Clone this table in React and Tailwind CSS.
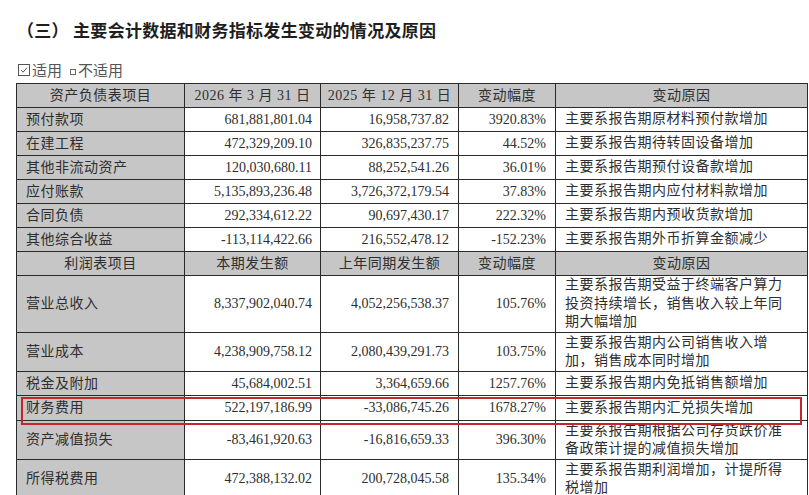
import React from "react";

const bal = [
  ["预付款项", "681,881,801.04", "16,958,737.82", "3920.83%", "主要系报告期原材料预付款增加"],
  ["在建工程", "472,329,209.10", "326,835,237.75", "44.52%", "主要系报告期待转固设备增加"],
  ["其他非流动资产", "120,030,680.11", "88,252,541.26", "36.01%", "主要系报告期预付设备款增加"],
  ["应付账款", "5,135,893,236.48", "3,726,372,179.54", "37.83%", "主要系报告期内应付材料款增加"],
  ["合同负债", "292,334,612.22", "90,697,430.17", "222.32%", "主要系报告期内预收货款增加"],
  ["其他综合收益", "-113,114,422.66", "216,552,478.12", "-152.23%", "主要系报告期外币折算金额减少"],
];

const inc = [
  ["营业总收入", "8,337,902,040.74", "4,052,256,538.37", "105.76%", "主要系报告期受益于终端客户算力投资持续增长，销售收入较上年同期大幅增加", "h-[57px]"],
  ["营业成本", "4,238,909,758.12", "2,080,439,291.73", "103.75%", "主要系报告期内公司销售收入增加，销售成本同时增加", "h-[39px]"],
  ["税金及附加", "45,684,002.51", "3,364,659.66", "1257.76%", "主要系报告期内免抵销售额增加", "h-[24px]"],
  ["财务费用", "522,197,186.99", "-33,086,745.26", "1678.27%", "主要系报告期内汇兑损失增加", "h-[25px]"],
  ["资产减值损失", "-83,461,920.63", "-16,816,659.33", "396.30%", "主要系报告期根据公司存货跌价准备政策计提的减值损失增加", "h-[39px]"],
  ["所得税费用", "472,388,132.02", "200,728,045.58", "135.34%", "主要系报告期利润增加，计提所得税增加", "h-[39px]"],
];

const bd = "border-[1.5px] border-[#2a2a2a]";
const gray = "bg-[#c6c6c6]";

function Head({ cols }) {
  return (
    <tr className="h-[24px]">
      {cols.map((c, i) => (
        <td key={i} className={`${bd} ${gray} text-center tracking-[0.5px] leading-none`}>{c}</td>
      ))}
    </tr>
  );
}

function Row({ r, h }) {
  return (
    <tr className={h}>
      <td className={`${bd} ${gray} pl-[9px] tracking-[0.5px] leading-none`}>{r[0]}</td>
      <td className={`${bd} text-right pr-[8px] leading-none`}>{r[1]}</td>
      <td className={`${bd} text-right pr-[9px] leading-none`}>{r[2]}</td>
      <td className={`${bd} text-right pr-[9px] leading-none`}>{r[3]}</td>
      <td className={`${bd} pl-[9px] pr-[18px] tracking-[0.5px] leading-[18.5px]`}>{r[4]}</td>
    </tr>
  );
}

export default function App() {
  return (
    <div
      className="w-[809px] h-[495px] overflow-hidden bg-white text-[#2e2e2e]"
      style={{ fontFamily: '"Liberation Serif", "Noto Sans CJK SC", serif' }}
    >
      <div
        className="pl-[17px] pt-[19px] text-[17px] font-bold leading-[22px] text-[#1e1e1e] tracking-[0.3px]"
        style={{ fontFamily: '"Noto Sans CJK SC", sans-serif' }}
      >
        （三） 主要会计数据和财务指标发生变动的情况及原因
      </div>
      <div
        className="pl-[18px] mt-[20px] flex items-center text-[15px] leading-[18px] text-[#555]"
        style={{ fontFamily: '"Noto Sans CJK SC", sans-serif' }}
      >
        <span className="inline-block w-[12px] h-[12px] border border-[#555] relative mr-[2px]">
          <svg viewBox="0 0 12 12" className="absolute inset-0 w-full h-full">
            <path d="M2.5 6.2 L5 8.6 L9.6 3.2" fill="none" stroke="#555" strokeWidth="1.2" />
          </svg>
        </span>
        <span>适用</span>
        <span className="inline-block w-[6px] h-[6px] border border-[#666] ml-[8px] mr-[2px] mt-[3px]" />
        <span>不适用</span>
      </div>
      <div className="relative ml-[16px] mt-[4px] w-[791px]">
        <table className="border-collapse table-fixed w-[791px] text-[14px]">
          <colgroup>
            <col className="w-[168px]" />
            <col className="w-[136px]" />
            <col className="w-[138px]" />
            <col className="w-[97px]" />
            <col className="w-[252px]" />
          </colgroup>
          <tbody>
            <Head cols={["资产负债表项目", "2026 年 3 月 31 日", "2025 年 12 月 31 日", "变动幅度", "变动原因"]} />
            {bal.map((r, i) => (
              <Row key={i} r={r} h="h-[24px]" />
            ))}
            <Head cols={["利润表项目", "本期发生额", "上年同期发生额", "变动幅度", "变动原因"]} />
            {inc.map((r, i) => (
              <Row key={i} r={r} h={r[5]} />
            ))}
          </tbody>
        </table>
        <div className="absolute left-[5px] top-[314px] w-[781px] h-[28px] border-2 border-[#c0262c]" />
      </div>
    </div>
  );
}
